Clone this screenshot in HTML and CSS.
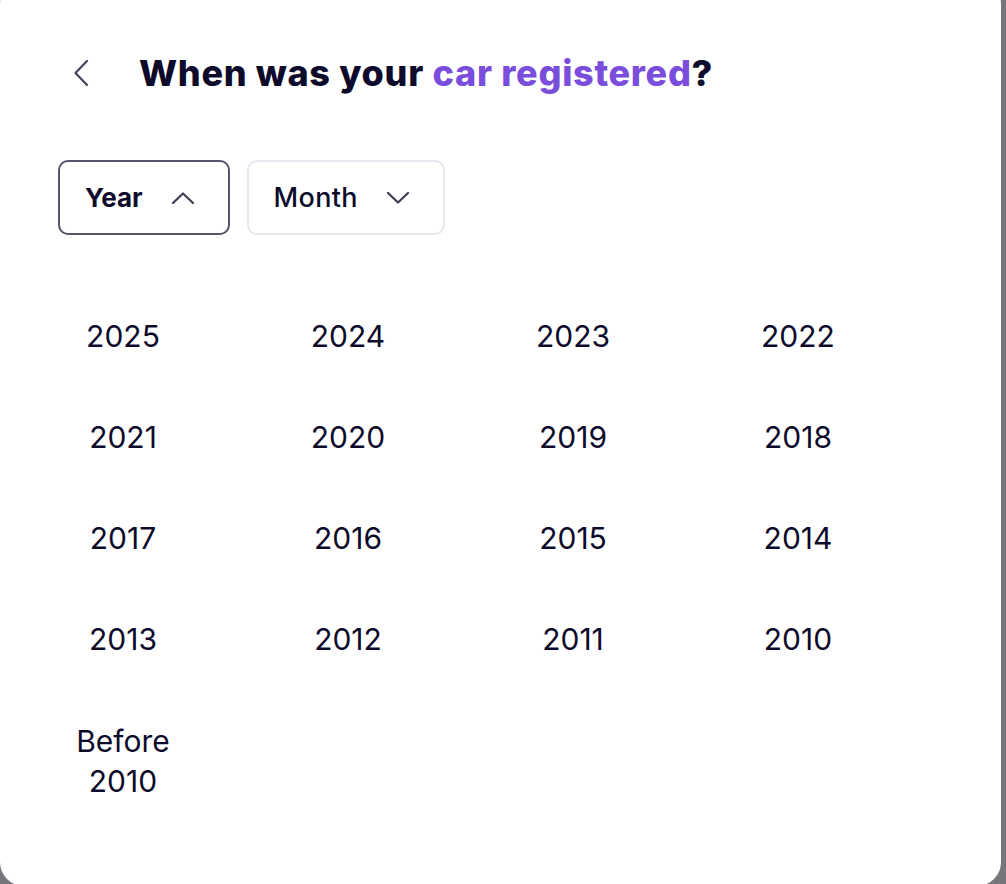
FILE: index.html
```html
<!DOCTYPE html>
<html lang="en">
<head>
<meta charset="utf-8">
<title>When was your car registered?</title>
<link rel="stylesheet" href="styles.css">
</head>
<body>
<main class="card">
  <header class="header">
    <button class="back" aria-label="Back">
      <svg width="16" height="28" viewBox="0 0 16 28" fill="none" stroke="#46445a" stroke-width="2.2" stroke-linecap="round" stroke-linejoin="round"><path d="M14 2 L2.5 14 L14 26"/></svg>
    </button>
    <h1 class="title">When was your <span class="accent">car registered</span>?</h1>
  </header>

  <div class="tabs">
    <button class="tab tab-active">
      <span class="tab-label bold">Year</span>
      <svg width="24" height="12" viewBox="0 0 24 12" fill="none" stroke="#3e3c50" stroke-width="2.2" stroke-linecap="round" stroke-linejoin="round"><path d="M2 11 L12 1.5 L22 11"/></svg>
    </button>
    <button class="tab">
      <span class="tab-label month">Month</span>
      <svg width="24" height="12" viewBox="0 0 24 12" fill="none" stroke="#3e3c50" stroke-width="2.2" stroke-linecap="round" stroke-linejoin="round"><path d="M2 1 L12 10.5 L22 1"/></svg>
    </button>
  </div>

  <div class="years">
    <button class="year">2025</button>
    <button class="year">2024</button>
    <button class="year">2023</button>
    <button class="year">2022</button>
    <button class="year">2021</button>
    <button class="year">2020</button>
    <button class="year">2019</button>
    <button class="year">2018</button>
    <button class="year">2017</button>
    <button class="year">2016</button>
    <button class="year">2015</button>
    <button class="year">2014</button>
    <button class="year">2013</button>
    <button class="year">2012</button>
    <button class="year">2011</button>
    <button class="year">2010</button>
    <button class="year">Before 2010</button>
  </div>
</main>
</body>
</html>
```

FILE: styles.css
```css
* { box-sizing: border-box; }

html, body {
  margin: 0;
  padding: 0;
  height: 100%;
  overflow: hidden;
}

body {
  background: #77767b;
  font-family: Inter, "Noto Sans", sans-serif;
  color: #0d0b2b;
}

.card {
  width: 1001px;
  height: 906px;
  margin-top: -20px;
  background: #ffffff;
  border-radius: 24px;
  padding: 71px 0 0 58px;
}

button {
  font-family: inherit;
  color: inherit;
  background: none;
  border: none;
  padding: 0;
  margin: 0;
  cursor: pointer;
}

.header {
  display: flex;
  align-items: center;
  height: 44px;
  padding-left: 15px;
  gap: 50px;
}

.back {
  display: flex;
  width: 16px;
  height: 28px;
}

.title {
  margin: 0;
  font-size: 36px;
  line-height: 44px;
  font-weight: 800;
  letter-spacing: 0.7px;
  color: #0d0b2b;
}

.accent { color: #7a4ddc; }

.tabs {
  display: flex;
  gap: 17px;
  margin-top: 65px;
}

.tab {
  display: flex;
  align-items: center;
  height: 75px;
  gap: 28px;
  padding: 0 33px 0 25px;
  border: 2px solid #e8e6ee;
  border-radius: 10px;
}

.tab-active { border-color: #57536b; }

.tab-label {
  font-size: 26px;
  font-weight: 500;
  line-height: 32px;
}

.tab-label.bold { font-weight: 700; }

.tab-label.month {
  font-size: 27px;
  letter-spacing: 0.3px;
}

.years {
  display: grid;
  grid-template-columns: repeat(4, 130px);
  column-gap: 95px;
  row-gap: 1px;
  margin-top: 51px;
}

.year {
  padding: 30px 0;
  font-size: 30px;
  line-height: 40px;
  font-weight: 400;
  text-align: center;
}

.year:last-child { padding-top: 31px; }
```
